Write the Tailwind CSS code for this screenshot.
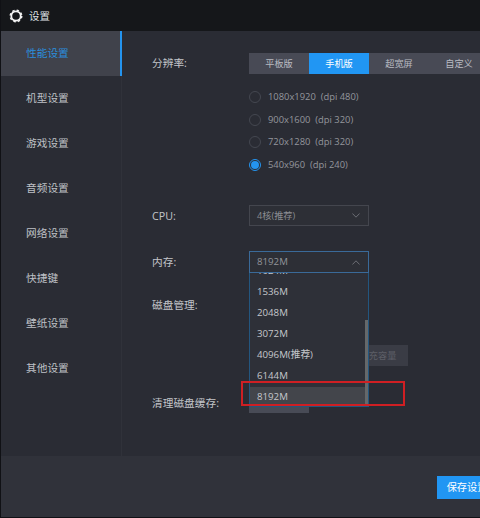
<!DOCTYPE html>
<html lang="zh-CN">
<head>
<meta charset="utf-8">
<title>设置</title>
<script src="https://cdn.jsdelivr.net/npm/@tailwindcss/browser@4"></script>
</head>
<body class="w-[480px] h-[518px] overflow-hidden bg-[#101115] font-['Open_Sans','Noto_Sans_CJK_SC',sans-serif] whitespace-nowrap">
<div class="flex flex-col w-[480px] h-[518px] overflow-hidden border-l border-b border-[#101115]">
  <header class="h-[31px] shrink-0 bg-[#15171a] flex items-center pl-2 gap-[6px] text-[#dfe1e5]">
    <svg class="w-[14px] h-[14px]" viewBox="0 0 14 14" fill="none" stroke="#f4f4f4">
      <circle cx="7" cy="7" r="4.7" stroke-width="1.8"/>
      <circle cx="7" cy="7" r="5.8" stroke-width="1.4" stroke-dasharray="2.4 2.155"/>
    </svg>
    <h1 class="text-[10.5px] leading-4">设置</h1>
  </header>
  <div class="flex h-[425px] shrink-0 bg-[#2a2c34]">
    <nav class="w-[121px] shrink-0 border-r border-[#30323a] text-[10.7px] text-[#bfc1c6]">
      <a class="-mr-px h-[45px] flex items-center pl-[25px] bg-[#40424b] border-r-2 border-[#2494ef] text-[#2b8edc]">性能设置</a>
      <a class="h-[45px] flex items-center pl-[25px]">机型设置</a>
      <a class="h-[45px] flex items-center pl-[25px]">游戏设置</a>
      <a class="h-[45px] flex items-center pl-[25px]">音频设置</a>
      <a class="h-[45px] flex items-center pl-[25px]">网络设置</a>
      <a class="h-[45px] flex items-center pl-[25px]">快捷键</a>
      <a class="h-[45px] flex items-center pl-[25px]">壁纸设置</a>
      <a class="h-[45px] flex items-center pl-[25px]">其他设置</a>
    </nav>
    <main class="flex-1 min-w-0 pl-[30px] pt-[22px] text-[10.7px] text-[#c3c5ca]">
      <section class="flex h-[152px]">
        <div class="w-[97px] shrink-0 h-[21px] flex items-center">分辨率:</div>
        <div>
          <div class="flex w-[240px] h-[21px] bg-[#484a55] text-[9.2px] text-[#b9bbc2]">
            <div class="w-[60px] flex items-center justify-center">平板版</div>
            <div class="w-[60px] flex items-center justify-center bg-[#2196f3] text-white">手机版</div>
            <div class="w-[60px] flex items-center justify-center">超宽屏</div>
            <div class="w-[60px] flex items-center justify-center">自定义</div>
          </div>
          <div class="pt-[12px] text-[9.4px] text-[#94969c]">
            <div class="h-[22.5px] flex items-center gap-[7px]"><span class="w-[12px] h-[12px] rounded-full border border-[#444750]"></span>1080x1920&nbsp; (dpi 480)</div>
            <div class="h-[22.5px] flex items-center gap-[7px]"><span class="w-[12px] h-[12px] rounded-full border border-[#444750]"></span>900x1600&nbsp; (dpi 320)</div>
            <div class="h-[22.5px] flex items-center gap-[7px]"><span class="w-[12px] h-[12px] rounded-full border border-[#444750]"></span>720x1280&nbsp; (dpi 320)</div>
            <div class="h-[22.5px] flex items-center gap-[7px]"><span class="w-[12px] h-[12px] rounded-full border border-[#2494ef] flex items-center justify-center"><i class="block w-2 h-2 rounded-full bg-[#2494ef]"></i></span>540x960&nbsp; (dpi 240)</div>
          </div>
        </div>
      </section>
      <section class="flex h-[46px]">
        <div class="w-[97px] shrink-0 h-[22px] flex items-center">CPU:</div>
        <div class="w-[120px] h-[21px] border border-[#44464e] bg-[#2d2f36] flex items-center justify-between pl-[7px] pr-2 text-[9.2px] text-[#8b8d93]">4核(推荐)
          <svg class="w-2 h-[5px]" viewBox="0 0 8 5" fill="none" stroke="#6c6e75"><path d="M.4.5 4 4.2 7.6.5"/></svg>
        </div>
      </section>
      <section class="flex h-[43px]">
        <div class="w-[97px] shrink-0 h-[23px] flex items-center">内存:</div>
        <div class="relative">
          <div class="w-[120px] h-[22px] border border-[#3a6a99] bg-[#2d2f36] flex items-center justify-between pl-[7px] pr-2 text-[9.7px] text-[#92949a]">8192M
            <svg class="w-2 h-[5px]" viewBox="0 0 8 5" fill="none" stroke="#6c6e75"><path d="M.4 4.5 4 .8l3.6 3.7"/></svg>
          </div>
          <div class="absolute z-10 left-0 top-[22px] w-[120px] h-[134px] overflow-hidden border-x border-b border-[#23567f] bg-[#2e3038] text-[9.7px] text-[#c5c7cb]">
            <ul class="-mt-[12px]">
              <li class="h-[21px] flex items-center pl-[7px]">1024M</li>
              <li class="h-[21px] flex items-center pl-[7px]">1536M</li>
              <li class="h-[21px] flex items-center pl-[7px]">2048M</li>
              <li class="h-[21px] flex items-center pl-[7px]">3072M</li>
              <li class="h-[21px] flex items-center pl-[7px]">4096M(推荐)</li>
              <li class="h-[21px] flex items-center pl-[7px]">6144M</li>
              <li class="h-[20px] flex items-center pl-[7px] bg-[#43454b]">8192M</li>
            </ul>
            <div class="absolute right-0 top-[47px] w-[3px] h-[86px] bg-[#65686a]"></div>
          </div>
          <div class="absolute z-20 -left-2 top-[130px] w-[164px] h-[25px] border-2 border-[#cf1f23]"></div>
        </div>
      </section>
      <section class="h-[97px]">
        <div class="h-[22px] flex items-center">磁盘管理:</div>
        <div class="ml-[196px] mt-[29px] w-[60px] h-[21px] bg-[#3a3c45] flex items-center justify-center text-[9.2px] text-[#5d5f67]">扩充容量</div>
      </section>
      <section class="flex">
        <div class="w-[97px] h-[24px] flex items-center">清理磁盘缓存:</div>
        <div class="w-[60px] h-[22px] bg-[#484b56]"></div>
      </section>
    </main>
  </div>
  <footer class="h-[61px] shrink-0 bg-[#30323a] flex justify-end pt-[20px]">
    <button class="-mr-[17px] w-[60px] h-[23px] shrink-0 bg-[#2196f3] text-white text-[10.2px]">保存设置</button>
  </footer>
</div>
</body>
</html>
